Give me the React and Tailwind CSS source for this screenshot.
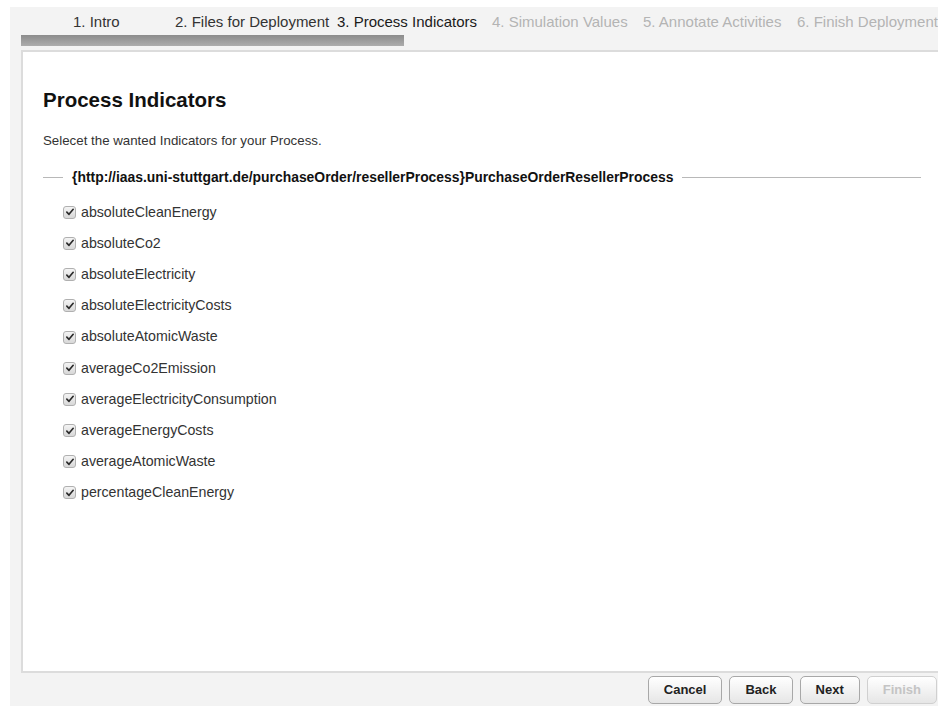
import React from 'react';

const steps = [
  { label: '1. Intro', state: 'done', cls: 'ml-[63px] w-[102px]' },
  { label: '2. Files for Deployment', state: 'done', cls: 'w-[162px]' },
  { label: '3. Process Indicators', state: 'active', cls: 'w-[155px]' },
  { label: '4. Simulation Values', state: 'todo', cls: 'w-[151px]' },
  { label: '5. Annotate Activities', state: 'todo', cls: 'w-[154px]' },
  { label: '6. Finish Deployment', state: 'todo', cls: 'w-[160px]' },
];

const indicators = [
  'absoluteCleanEnergy',
  'absoluteCo2',
  'absoluteElectricity',
  'absoluteElectricityCosts',
  'absoluteAtomicWaste',
  'averageCo2Emission',
  'averageElectricityConsumption',
  'averageEnergyCosts',
  'averageAtomicWaste',
  'percentageCleanEnergy',
];

const stepColor = (state) => {
  switch (state) {
    case 'active':
      return 'text-[#1a1a1a]';
    case 'done':
      return 'text-[#333333]';
    default:
      return 'text-[#b4b4b4]';
  }
};

const CheckBox = () => (
  <span className="flex h-[13px] w-[13px] shrink-0 items-center justify-center rounded-[3px] border border-[#b0b0b0] bg-gradient-to-b from-[#f4f4f4] to-[#d8d8d8]">
    <svg viewBox="0 0 12 12" className="h-[10px] w-[10px]">
      <path d="M2.2 6.2 L4.8 8.8 L9.8 2.8" fill="none" stroke="#2a2a2a" strokeWidth="2" strokeLinecap="round" strokeLinejoin="round" />
    </svg>
  </span>
);

const WizardButton = ({ children, disabled }) => (
  <button
    className={`h-[28px] rounded-[5px] border bg-gradient-to-b from-white to-[#e6e6e6] px-[15px] text-[13px] font-bold ${
      disabled ? 'border-[#d0d0d0] text-[#c4c4c4]' : 'border-[#a8a8a8] text-[#222222]'
    }`}
  >
    {children}
  </button>
);

export default function App() {
  return (
    <div className="h-[706px] w-[938px] overflow-hidden bg-white pl-[10px] pt-[7px] font-['Liberation_Sans',Arial,sans-serif]">
      <div className="flex h-full flex-col bg-[#f3f3f3]">
        {/* wizard steps */}
        <div className="flex h-[28px] items-center whitespace-nowrap pt-[2px] text-[15px]">
          {steps.map((s) => (
            <span key={s.label} className={`shrink-0 ${s.cls} ${stepColor(s.state)}`}>
              {s.label}
            </span>
          ))}
        </div>

        {/* progress */}
        <div className="ml-[11px] h-[11px] w-[383px] bg-gradient-to-b from-[#8c8c8c] to-[#acacac]" />

        {/* page content */}
        <div className="ml-[11px] mt-[4px] h-[623px] border-2 border-r-0 border-[#dcdcdc] bg-white pl-[20px] pr-[17px] pt-[36px] text-[#333333]">
          <h1 className="text-[20.5px] font-bold leading-[24px] text-[#111111]">Process Indicators</h1>
          <p className="mt-[19px] text-[13.3px]">Selecet the wanted Indicators for your Process.</p>

          <div className="mt-[16px] flex items-center">
            <span className="h-px w-[20px] bg-[#b8b8b8]" />
            <span className="mx-[9px] text-[13.9px] font-bold text-[#111111]">
              {'{http://iaas.uni-stuttgart.de/purchaseOrder/resellerProcess}PurchaseOrderResellerProcess'}
            </span>
            <span className="h-px flex-1 bg-[#b8b8b8]" />
          </div>

          <ul className="mt-[18px] flex flex-col gap-[18.2px] pl-[20px]">
            {indicators.map((name) => (
              <li key={name} className="flex h-[13px] items-center gap-[5px] text-[14.2px] text-[#333333]">
                <CheckBox />
                <span>{name}</span>
              </li>
            ))}
          </ul>
        </div>

        {/* footer buttons */}
        <div className="mt-[3px] flex justify-end gap-[7px] pr-[1px]">
          <WizardButton>Cancel</WizardButton>
          <WizardButton>Back</WizardButton>
          <WizardButton>Next</WizardButton>
          <WizardButton disabled>Finish</WizardButton>
        </div>
      </div>
    </div>
  );
}
